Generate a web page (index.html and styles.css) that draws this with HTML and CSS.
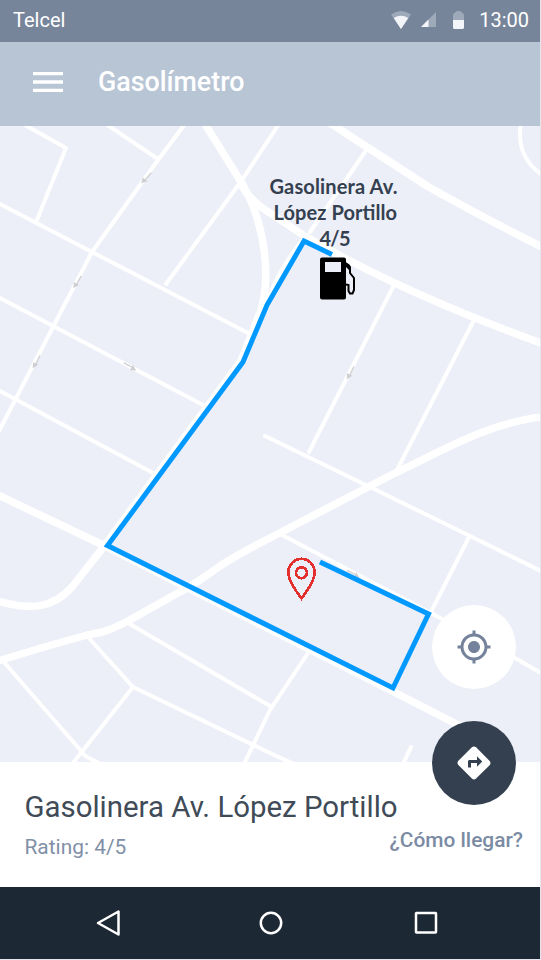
FILE: index.html
```html
<!DOCTYPE html>
<html lang="es">
<head>
<meta charset="utf-8">
<title>Gasolímetro</title>
<link rel="stylesheet" href="styles.css">
</head>
<body>
<div class="phone">
  <header class="status">
    <span class="carrier">Telcel</span>
    <div class="indicators">
      <svg class="wifi" width="20" height="18" viewBox="0 0 20 18"><path fill="#9eaab9" d="M0 3.5Q10-3.5 20 3.5L10 18Z"/><path fill="#f3f5f8" d="M2.700 7Q10 2.500 17.300 7L10 18Z"/></svg>
      <svg class="signal" width="15" height="15" viewBox="0 0 15 15"><path fill="#9eaab9" d="M15 0V15H0Z"/><path fill="#f3f5f8" d="M7.500 7.500V15H0Z"/></svg>
      <svg class="battery" width="11" height="18" viewBox="0 0 11 18"><path fill="#9eaab9" d="M0 9V4Q0 2 2 2Q2 0 5.500 0T9 2Q11 2 11 4V9Z"/><path fill="#f3f5f8" d="M0 9H11V17L10 18H1L0 17Z"/></svg>
      <span class="clock">13:00</span>
    </div>
  </header>
  <nav class="appbar">
    <svg class="menu" width="30" height="20" viewBox="0 0 18 12"><path fill="#fff" d="M0 12h18v-2H0zm0-5h18V5H0zm0-7v2h18V0z"/></svg>
    <h1 class="title">Gasolímetro</h1>
  </nav>
  <main class="map">
    <svg class="canvas" width="540" height="636" viewBox="0 126 540 636">
      <defs>
        <g id="oneway"><path stroke="#cfcfd2" stroke-width="1.300" fill="none" d="M-7 -1L3 -1"/><path fill="#cfcfd2" d="M2-3.500L7.500 0L2 2.500Z"/></g>
      </defs>
      <g class="street">
        <path d="M23 124L66 148L36.500 221"/>
        <path d="M106 124L158 159"/>
        <path d="M185 124L158 160L92 252L53 327L-2 433"/>
        <path d="M-1 203.500L92 252L250 334"/>
        <path d="M-1 297.500L53 326L205 406"/>
        <path d="M-1 390.500L155 474"/>
        <path d="M279 124L242 180L166 284"/>
        <path d="M367 149L310 232"/>
        <path d="M521 124C517 145 525 163 541 174"/>
        <path d="M393 287L309 452"/>
        <path d="M474 320L397 470"/>
        <path d="M265 436L370 487L470 536L541 571"/>
        <path d="M282 535L429 612L515 658L541 673"/>
        <path d="M469 537L431 612"/>
        <path d="M308 653L270 710L244 764"/>
        <path d="M128 623L270 706"/>
        <path d="M88 637L133 687L270 753L294 764"/>
        <path d="M133 687L73 763"/>
        <path d="M3 661L82 752Q83 756 99 763"/>
        <path d="M411 747L403 764"/>
      </g>
      <g class="avenue">
        <path d="M205 124L243 185C267 228 270 280 261 310L241 361L105 545L72 587C52 609 30 610 -2 601"/>
        <path d="M243 188Q252 202 270 213L303 235Q400 292 542 343.500"/>
        <path d="M330 123L367 147L427 186Q480 216 542 247"/>
        <path d="M-2 495L105 546L392 691L470 731"/>
        <path d="M542 417C490 422 440 452 397 472L270 538Q240 553 220 566Q204 578 187 588L128 621C107 632 99 633 87 635Q43 647 -2 661"/>
      </g>
      <path class="lane" d="M303 240Q275 275 266 308"/>
      <g>
        <use href="#oneway" transform="translate(146 177.500) rotate(130)"/>
        <use href="#oneway" transform="translate(77 281.500) rotate(119)"/>
        <use href="#oneway" transform="translate(36 361.500) rotate(115)"/>
        <use href="#oneway" transform="translate(129.500 367) rotate(28)"/>
        <use href="#oneway" transform="translate(350 372.500) rotate(115)"/>
        <use href="#oneway" transform="translate(353 574.500) rotate(27)"/>
      </g>
      <path class="route" d="M332 254.500L304 241L267 305L243 362L107.500 545.500L393 688L428.500 614L320 562"/>
      <text class="label" x="269.500" y="194" textLength="128" lengthAdjust="spacing">Gasolinera Av.</text>
      <text class="label" x="273.500" y="220" textLength="123.500" lengthAdjust="spacing">López Portillo</text>
      <text class="label" x="319.500" y="246" textLength="31" lengthAdjust="spacing">4/5</text>
      <g>
        <path fill="#000" fill-rule="evenodd" d="M322 257.500H344Q346 257.500 346 259.500V297.500Q346 299.500 344 299.500H322Q320 299.500 320 297.500V259.500Q320 257.500 322 257.500ZM325 262V272H341V262Z"/>
        <path fill="none" stroke="#000" stroke-width="2" d="M345 263L350 267V273L354 278V290L352.500 293.500H350L348.500 291V285L346 284.500"/>
        <path fill="#000" d="M345 261.500L350 265V271L346 267Z"/>
      </g>
      <g fill="none" stroke="#e3302f" shape-rendering="crispEdges">
        <path stroke-width="2.700" d="M301.500 598.500Q288.300 581 288.300 572.500A13.200 13.700 0 0 1 314.700 572.500Q314.700 581 301.500 598.500Z"/>
        <circle stroke-width="2.700" cx="301.500" cy="572.700" r="5.500"/>
      </g>
    </svg>
    <button class="fab fab-locate" aria-label="Mi ubicación">
      <svg width="36" height="36" viewBox="0 0 24 24"><path fill="#74839b" d="M12 8c-2.210 0-4 1.790-4 4s1.790 4 4 4 4-1.790 4-4-1.790-4-4-4zm8.940 3c-.46-4.170-3.770-7.480-7.940-7.940V1h-2v2.060C6.830 3.520 3.520 6.830 3.060 11H1v2h2.060c.46 4.170 3.770 7.480 7.940 7.940V23h2v-2.060c4.170-.46 7.480-3.770 7.940-7.940H23v-2h-2.060zM12 19c-3.870 0-7-3.130-7-7s3.130-7 7-7 7 3.130 7 7-3.130 7-7 7z"/></svg>
    </button>
    <button class="fab fab-route" aria-label="¿Cómo llegar?">
      <svg width="36" height="36" viewBox="0 0 24 24"><path fill="#fff" d="M22.430 10.590l-9.010-9.010c-.75-.75-2.070-.76-2.840 0l-9 9c-.78.780-.78 2.040 0 2.820l9 9c.39.390.9.590 1.410.590.510 0 1.020-.2 1.410-.580l8.990-8.990c.79-.76.800-2.020.040-2.830zM14 14.500V12h-4v3H8v-4c0-.55.450-1 1-1h5V7.500l3.500 3.500-3.500 3.500z"/></svg>
    </button>
  </main>
  <section class="sheet">
    <div class="place">
      <h2 class="name">Gasolinera Av. López Portillo</h2>
      <p class="rating">Rating: 4/5</p>
    </div>
    <span class="directions">¿Cómo llegar?</span>
  </section>
  <footer class="softkeys">
    <svg width="26" height="28" viewBox="0 0 26 28"><path d="M23.500 2.500V25.500L3 14Z"/></svg>
    <svg class="home" width="26" height="28" viewBox="0 0 26 28"><circle cx="13" cy="14" r="10.200"/></svg>
    <svg width="26" height="28" viewBox="0 0 26 28"><rect x="3" y="4" width="20" height="19.500" rx=".5"/></svg>
  </footer>
</div>
</body>
</html>
```
FILE: styles.css
```css
* { box-sizing: border-box; margin: 0; padding: 0; }
body { background: #e3e6ed; font-family: Roboto, sans-serif; overflow: hidden; }
svg { display: block; flex: none; }
.phone { width: 540px; height: 959px; display: flex; flex-direction: column; }
.status { height: 42px; padding: 0 11px 3px 13px; display: flex; align-items: center; justify-content: space-between; background: #77859b; color: #fff; font-size: 20px; }
.indicators { display: flex; align-items: center; }
.signal { margin-left: 10px; }
.battery { margin-left: 17px; }
.clock { margin-left: 15px; }
.appbar { height: 84px; padding: 0 33px 4px; display: flex; align-items: center; gap: 35px; background: #b8c5d5; }
.title { color: #fff; font-size: 26.8px; font-weight: 500; }
.map { position: relative; height: 636px; background: #eceff7; }
.street, .avenue, .lane { fill: none; stroke: #fff; stroke-linecap: round; stroke-linejoin: round; }
.street { stroke-width: 4; }
.avenue { stroke-width: 7.5; }
.lane { stroke-width: 5; }
.route { fill: none; stroke: #0099ff; stroke-width: 5; }
.label { font: 700 20px Lato, sans-serif; fill: #344050; }
.fab { position: absolute; left: 432px; width: 84px; height: 84px; border: 0; border-radius: 50%; display: grid; place-items: center; }
.fab-locate { top: 479px; background: #fff; }
.fab-route { top: 595px; background: #344050; }
.sheet { height: 125px; padding: 26px 17px 0 24.5px; display: flex; justify-content: space-between; background: #fff; white-space: nowrap; }
.place { width: 364px; }
.name { color: #404b57; font-size: 29.4px; line-height: 38px; font-weight: 400; }
.rating { margin-top: 9px; color: #8190a7; font-size: 20.9px; line-height: 24px; }
.directions { margin-top: 40px; color: #7b8ba3; font-size: 20.9px; line-height: 24px; font-weight: 500; }
.softkeys { height: 72px; padding: 0 102px 0 95px; display: flex; align-items: center; background: #1d2835; }
.softkeys svg { fill: none; stroke: #fff; stroke-width: 2.500; stroke-linejoin: round; }
.softkeys .home { margin: 0 129px 0 136.5px; }
```
